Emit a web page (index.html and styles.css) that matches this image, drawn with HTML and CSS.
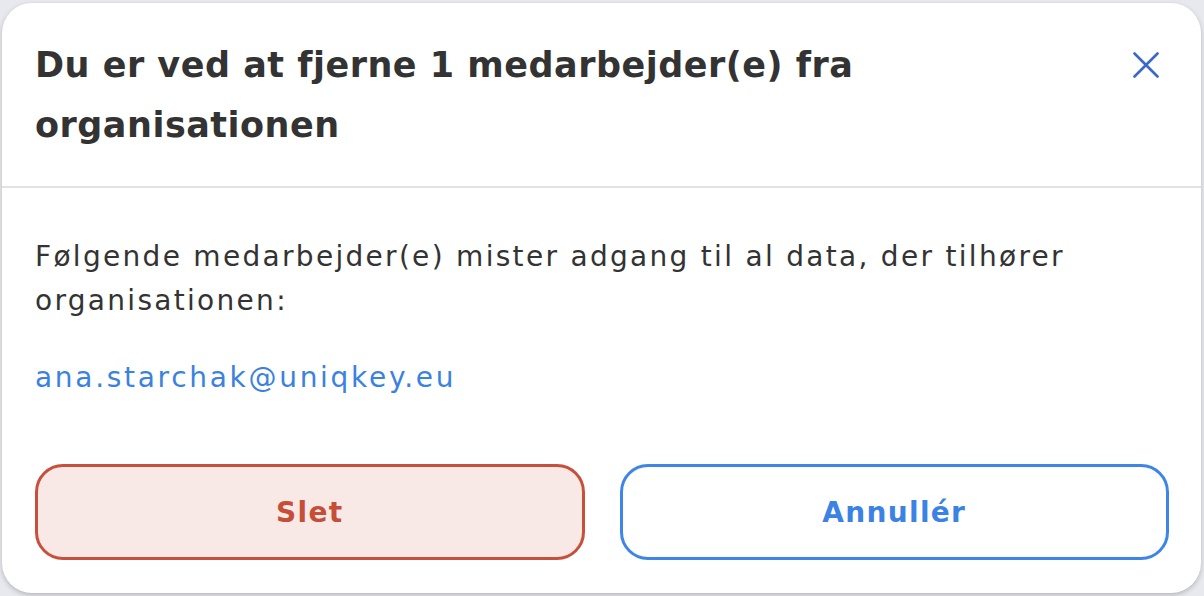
FILE: index.html
```html
<!doctype html>
<html>
 <head>
  <title>Fjern medarbejder</title>
  <link rel="stylesheet" href="styles.css">
 </head>
 <body>
  <div class="dialog">
   <div class="dialog-header">
    <h1>Du er ved at fjerne 1 medarbejder(e) fra organisationen</h1>
    <button class="btn-close" aria-label="Luk">
     <svg width="26" height="26" viewBox="0 0 26 26">
      <path d="M1.5 1.5 L24.5 24.5 M24.5 1.5 L1.5 24.5" stroke="currentColor" stroke-width="2.6" stroke-linecap="round" fill="none"/>
     </svg>
    </button>
   </div>
   <div class="dialog-body">
    <p class="text">Følgende medarbejder(e) mister adgang til al data, der tilhører organisationen:</p>
    <p class="email">ana.starchak@uniqkey.eu</p>
    <div class="actions">
     <button class="btn btn-delete">Slet</button>
     <button class="btn btn-cancel">Annullér</button>
    </div>
   </div>
  </div>
 </body>
</html>
```
FILE: styles.css
```css
body {
  margin: 0;
  padding: 3px 3px 3px 2px;
  background-color: #e8e9ee;
  font-family: "DejaVu Sans", sans-serif;
  color: #333;
}

.dialog {
  width: 1199px;
  height: 590px;
  box-sizing: border-box;
  background-color: #fff;
  border-radius: 30px;
  box-shadow: 0 2px 5px rgba(0, 0, 0, 0.22);
  overflow: hidden;
}

.dialog-header {
  display: flex;
  align-items: flex-start;
  justify-content: space-between;
  gap: 60px;
  padding: 32px 42px 31px 33px;
  border-bottom: 2px solid #e2e2e4;
}

.dialog-header h1 {
  margin: 0;
  font-size: 35px;
  line-height: 60px;
  font-weight: bold;
  letter-spacing: 0.5px;
  color: #333;
}

.btn-close {
  flex: none;
  margin-top: 17px;
  padding: 0;
  border: none;
  background: none;
  color: #3b67c9;
  line-height: 0;
  cursor: pointer;
}

.dialog-body {
  padding: 47px 32px 33px 33px;
}

.text {
  margin: 0;
  font-size: 28px;
  line-height: 44px;
  letter-spacing: 2.3px;
}

.email {
  margin: 33px 0 0;
  font-size: 28px;
  line-height: 44px;
  letter-spacing: 2.7px;
  color: #3b82e0;
}

.actions {
  display: flex;
  gap: 35px;
  margin-top: 64px;
}

.btn {
  flex: 1;
  height: 96px;
  border-radius: 28px;
  font-family: "DejaVu Sans", sans-serif;
  font-size: 28px;
  font-weight: bold;
  letter-spacing: 1.3px;
  cursor: pointer;
}

.btn-delete {
  background-color: #f8e8e6;
  border: 3px solid #c8503b;
  color: #c44e38;
}

.btn-cancel {
  background-color: #fff;
  border: 3px solid #3d85e6;
  color: #3b82e4;
}
```
